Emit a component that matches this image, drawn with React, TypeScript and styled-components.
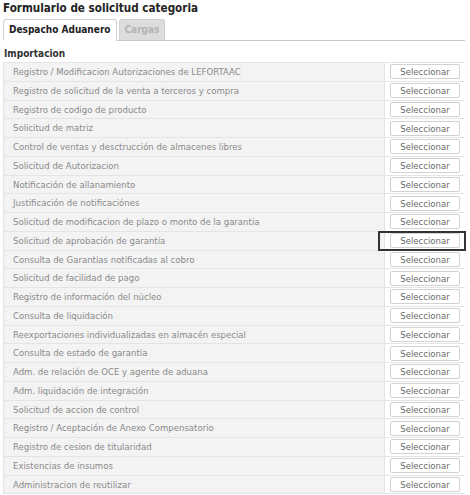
import React from "react";
import styled, { createGlobalStyle } from "styled-components";

const GlobalStyle = createGlobalStyle`
  html, body {
    margin: 0;
    padding: 0;
    background: #fff;
  }
  body {
    font-family: "DejaVu Sans Condensed", "DejaVu Sans", sans-serif;
  }
`;

const items = [
  "Registro / Modificacion Autorizaciones de LEFORTAAC",
  "Registro de solicitud de la venta a terceros y compra",
  "Registro de codigo de producto",
  "Solicitud de matriz",
  "Control de ventas y desctrucción de almacenes libres",
  "Solicitud de Autorizacion",
  "Notificación de allanamiento",
  "Justificación de notificaciónes",
  "Solicitud de modificacion de plazo o monto de la garantia",
  "Solicitud de aprobación de garantía",
  "Consulta de Garantias notificadas al cobro",
  "Solicitud de facilidad de pago",
  "Registro de información del núcleo",
  "Consulta de liquidación",
  "Reexportaciones individualizadas en almacén especial",
  "Consulta de estado de garantía",
  "Adm. de relación de OCE y agente de aduana",
  "Adm. liquidación de integración",
  "Solicitud de accion de control",
  "Registro / Aceptación de Anexo Compensatorio",
  "Registro de cesion de titularidad",
  "Existencias de insumos",
  "Administracion de reutilizar",
];

const Page = styled.div`
  width: 462px;
  padding: 0 5px 0 3px;
`;

const Title = styled.h1`
  margin: 0;
  padding-top: 1px;
  font-size: 11.6px;
  line-height: 15px;
  font-weight: bold;
  color: #222;
`;

const Tabs = styled.div`
  display: flex;
  gap: 2px;
  margin-top: 3px;
  border-bottom: 1px solid #c8c8c8;
`;

const Tab = styled.div<{ $active?: boolean }>`
  height: 20px;
  line-height: 20px;
  padding: 0 5px;
  font-size: 10px;
  font-weight: bold;
  border: 1px solid #cfcfcf;
  border-bottom: none;
  border-radius: 3px 3px 0 0;
  background: ${(p) => (p.$active ? "#fff" : "#dcdcdc")};
  color: ${(p) => (p.$active ? "#222" : "#b4b4b4")};
  margin-bottom: -1px;
  position: relative;
  ${(p) => (p.$active ? "border-bottom: 1px solid #fff;" : "")}
`;

const Section = styled.div`
  margin-top: 5px;
  padding: 0 1px;
  font-size: 10px;
  font-weight: bold;
  color: #333;
  line-height: 15px;
`;

const List = styled.div`
  margin-top: 1px;
  border-top: 1px solid #e4e4e4;
`;

const Row = styled.div`
  display: grid;
  grid-template-columns: 382px 1fr;
  height: 18.75px;
  box-sizing: border-box;
  border-bottom: 1px solid #e4e4e4;
`;

const Label = styled.div`
  background: #f3f3f3;
  border-left: 1px solid #e4e4e4;
  border-right: 1px solid #e4e4e4;
  padding-left: 9px;
  font-size: 9.5px;
  line-height: 17.75px;
  color: #8a8a8a;
  white-space: nowrap;
  overflow: hidden;
`;

const ButtonCell = styled.div<{ $focus?: boolean }>`
  display: flex;
  align-items: center;
  padding-left: 5px;
  position: relative;
  ${(p) =>
    p.$focus
      ? `outline: 2px solid #333; outline-offset: -1px; margin-left: -6px; padding-left: 11px;`
      : ""}
`;

const Button = styled.button`
  width: 70px;
  height: 15px;
  padding: 0;
  font-family: inherit;
  font-size: 9.5px;
  color: #6a6a6a;
  background: #fff;
  border: 1px solid #d2d2d2;
  border-radius: 2px;
  line-height: 13px;
`;

export default function App() {
  return (
    <Page>
      <GlobalStyle />
      <Title>Formulario de solicitud categoria</Title>
      <Tabs>
        <Tab $active>Despacho Aduanero</Tab>
        <Tab>Cargas</Tab>
      </Tabs>
      <Section>Importacion</Section>
      <List>
        {items.map((text, i) => (
          <Row key={text}>
            <Label>{text}</Label>
            <ButtonCell $focus={i === 9}>
              <Button>Seleccionar</Button>
            </ButtonCell>
          </Row>
        ))}
      </List>
    </Page>
  );
}
